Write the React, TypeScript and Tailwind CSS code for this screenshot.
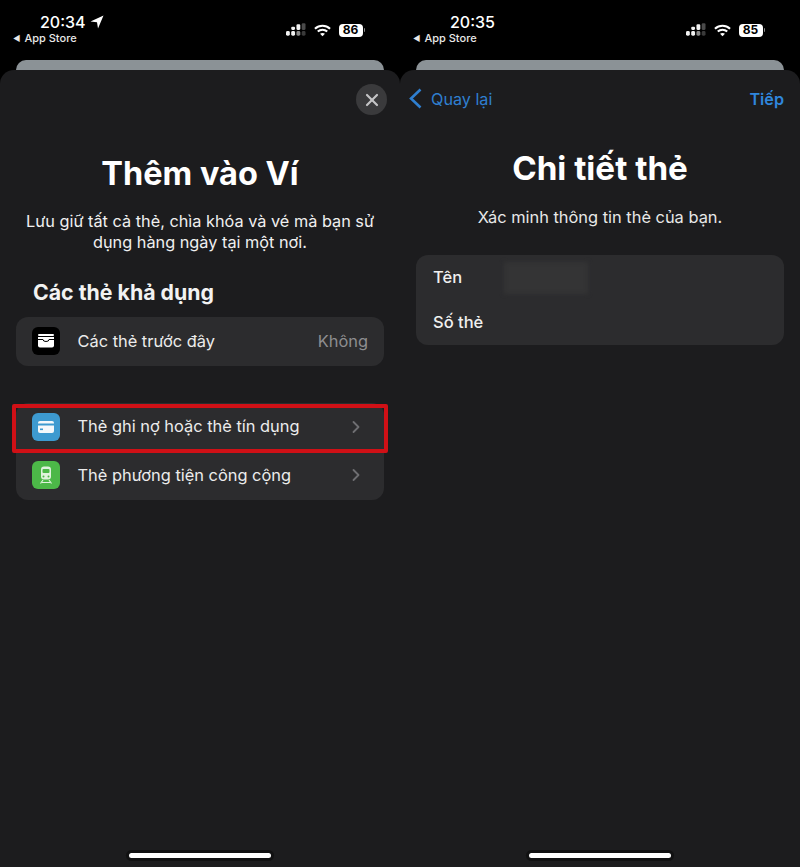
import React from "react";
import { ChevronRight, X } from "lucide-react";

const font = "font-['Inter','Liberation_Sans',sans-serif]";

function LocationArrow() {
  return (
    <svg width="14" height="14" viewBox="0 0 14 14" className="ml-[4px] mt-[1px]">
      <path d="M13.5 0.5 L0.5 6.5 L7 7.2 L8 13.5 Z" fill="#fff" />
    </svg>
  );
}

function CellBars() {
  return (
    <svg width="20" height="14" viewBox="0 0 21 14">
      <rect x="0" y="8" width="4" height="5" rx="1.5" fill="#f2f2f2" />
      <rect x="5.5" y="8" width="4" height="5" rx="1.5" fill="#f2f2f2" />
      <rect x="5.5" y="3.5" width="4" height="3.5" rx="1.2" fill="#f2f2f2" />
      <rect x="11" y="8" width="4" height="5" rx="1.5" fill="#8a8a8a" />
      <rect x="11" y="1" width="4" height="6" rx="1.2" fill="#f2f2f2" />
      <rect x="16.5" y="8" width="4" height="5" rx="1.5" fill="#3a3a3a" />
      <rect x="16.5" y="0" width="4" height="7" rx="1.2" fill="#4a4a4a" />
    </svg>
  );
}

function Wifi() {
  return (
    <svg width="17" height="13" viewBox="0 0 18 13" fill="none" stroke="#fff" strokeWidth="2.2">
      <path d="M1 4.6 C5.6 0.4 12.4 0.4 17 4.6" />
      <path d="M4 7.6 C6.8 5 11.2 5 14 7.6" />
      <path d="M9 12.6 L6.4 10 C7.8 8.8 10.2 8.8 11.6 10 Z" fill="#fff" stroke="none" />
    </svg>
  );
}

function Battery({ level }: { level: string }) {
  return (
    <div className="flex items-center">
      <div className="w-[24px] h-[13px] rounded-[4px] bg-white flex items-center justify-center text-[12px] leading-none font-bold text-black">
        {level}
      </div>
      <div className="w-[1.5px] h-[4px] bg-[#8a8a8a] rounded-r-sm ml-[1px]" />
    </div>
  );
}

function StatusBar({ time, located, level }: { time: string; located?: boolean; level: string }) {
  return (
    <div className="h-[60px] flex justify-between shrink-0">
      <div className="pt-[13px] pl-[13px] w-[120px]">
        <div className="flex items-center h-[17px] text-[16px] leading-none font-medium text-white">
          <span className={located ? "ml-[27px]" : "ml-[37px]"}>{time}</span>
          {located && <LocationArrow />}
        </div>
        <div className="flex items-center mt-[2px] h-[12px] text-[11px] leading-none font-medium text-[#e8e8e8]">
          <span className="text-[8px] mr-[4px]">◀</span>
          <span>App Store</span>
        </div>
      </div>
      <div className="flex items-center gap-[8px] h-[60px] pr-[35px]">
        <CellBars />
        <Wifi />
        <Battery level={level} />
      </div>
    </div>
  );
}

function WalletIcon() {
  return (
    <div className="w-[28px] h-[28px] rounded-[6px] bg-black flex items-center justify-center">
      <svg width="16" height="14" viewBox="0 0 16 14">
        <rect x="0" y="0" width="16" height="2" rx="1" fill="#fff" />
        <path d="M0 3 H16 V11.5 A2 2 0 0 1 14 13.5 H2 A2 2 0 0 1 0 11.5 Z" fill="#fff" />
        <path d="M0 5.5 H5 A3 2 0 0 0 11 5.5 H16" stroke="#000" strokeWidth="1" fill="none" />
      </svg>
    </div>
  );
}

function CardIcon() {
  return (
    <div className="w-[28px] h-[28px] rounded-[6px] bg-[#3d9ad0] flex items-center justify-center">
      <svg width="16" height="12" viewBox="0 0 16 12">
        <rect x="0" y="0" width="16" height="12" rx="2" fill="#f4f8fb" />
        <rect x="0" y="2.5" width="16" height="2" fill="#3d9ad0" />
        <rect x="2" y="7.5" width="3" height="1.6" fill="#3d9ad0" />
      </svg>
    </div>
  );
}

function TransitIcon() {
  return (
    <div className="w-[28px] h-[28px] rounded-[6px] bg-[#4cb848] flex items-center justify-center">
      <svg width="14" height="18" viewBox="0 0 14 18" fill="none">
        <rect x="2" y="0.5" width="10" height="13" rx="3" fill="#dff2dd" />
        <rect x="3.5" y="3" width="7" height="4" rx="1" fill="#4cb848" />
        <circle cx="4.5" cy="10.5" r="1" fill="#4cb848" />
        <circle cx="9.5" cy="10.5" r="1" fill="#4cb848" />
        <path d="M4 14 L1.5 17.5 M10 14 L12.5 17.5 M3 16.5 H11" stroke="#dff2dd" strokeWidth="1.2" />
      </svg>
    </div>
  );
}

function Row({ icon, label, right }: { icon: React.ReactNode; label: string; right: React.ReactNode }) {
  return (
    <div className="h-[48.5px] pl-[16px] pr-[16px] flex items-center">
      {icon}
      <span className="ml-[17.5px] text-[16.4px] text-[#ececec] flex-1">{label}</span>
      {right}
    </div>
  );
}

function Chevron() {
  return <ChevronRight className="w-[20px] h-[20px] text-[#6f6f72] mr-[2px]" strokeWidth={2.2} />;
}

function Phone({ children, status }: { children: React.ReactNode; status: React.ReactNode }) {
  return (
    <div className="w-[400px] h-[867px] bg-black flex flex-col relative">
      {status}
      <div className="mx-[16px] h-[10px] rounded-t-[10px] bg-[#8b9296] shrink-0" />
      <div className="flex-1 bg-[#1c1c1e] rounded-t-[14px] relative">
        {children}
        <div className="absolute left-[129px] top-[783px] w-[142px] h-[5px] rounded-full bg-white shadow-[0_0_0_3px_#111112]" />
      </div>
    </div>
  );
}

export default function App() {
  return (
    <div className={`w-[800px] h-[867px] flex overflow-hidden ${font}`}>
      <Phone status={<StatusBar time="20:34" located level="86" />}>
        <div className="flex justify-end pt-[14px] pr-[13px]">
          <div className="w-[31px] h-[31px] rounded-full bg-[#3a3a3c] flex items-center justify-center">
            <X className="w-[20px] h-[20px] text-[#c4c4c6]" strokeWidth={2.6} />
          </div>
        </div>
        <h1 className="mt-[37px] text-center text-[32.5px] leading-[44px] font-bold text-white">Thêm vào Ví</h1>
        <p className="mt-[15px] px-[16px] text-center text-[16.3px] leading-[21px] text-[#f0f0f0]">
          Lưu giữ tất cả thẻ, chìa khóa và vé mà bạn sử dụng hàng ngày tại một nơi.
        </p>
        <h2 className="mt-[24px] ml-[33px] text-[21.3px] leading-[30px] font-bold text-[#f2f2f2]">Các thẻ khả dụng</h2>
        <div className="mt-[10px] mx-[16px] rounded-[12px] bg-[#2c2c2e]">
          <Row icon={<WalletIcon />} label="Các thẻ trước đây" right={<span className="text-[16.4px] text-[#8e8e90]">Không</span>} />
        </div>
        <div className="mt-[37px] mx-[16px] rounded-[12px] bg-[#2c2c2e] relative">
          <Row icon={<CardIcon />} label="Thẻ ghi nợ hoặc thẻ tín dụng" right={<Chevron />} />
          <Row icon={<TransitIcon />} label="Thẻ phương tiện công cộng" right={<Chevron />} />
          <div className="absolute left-[-4px] right-[-4px] top-[1px] h-[49px] border-[4px] border-[#d01016] rounded-[2px]" />
        </div>
      </Phone>
      <Phone status={<StatusBar time="20:35" level="85" />}>
        <div className="h-[58px] flex items-center justify-between pl-[9px] pr-[16px]">
          <div className="flex items-center text-[#2f7fd0]">
            <svg width="13" height="21" viewBox="0 0 13 21" fill="none" stroke="currentColor" strokeWidth="2.6">
              <path d="M11.5 1.5 L2 10.5 L11.5 19.5" />
            </svg>
            <span className="ml-[9px] text-[16.2px]">Quay lại</span>
          </div>
          <span className="text-[16.2px] font-semibold text-[#2f86dc]">Tiếp</span>
        </div>
        <h1 className="mt-[18px] text-center text-[33.2px] leading-[44px] font-bold text-white">Chi tiết thẻ</h1>
        <p className="mt-[16px] text-center text-[16.4px] leading-[22px] text-[#e8e8e8]">Xác minh thông tin thẻ của bạn.</p>
        <div className="mt-[27px] mx-[16px] rounded-[12px] bg-[#2c2c2e] text-[16.5px] font-medium text-[#f0f0f0]">
          <div className="h-[45px] pl-[17px] flex items-center">
            <span className="w-[71px]">Tên</span>
            <div className="w-[84px] h-[32px] bg-[#343435] blur-[2px]" />
          </div>
          <div className="h-[45px] pl-[17px] flex items-center">Số thẻ</div>
        </div>
      </Phone>
    </div>
  );
}
